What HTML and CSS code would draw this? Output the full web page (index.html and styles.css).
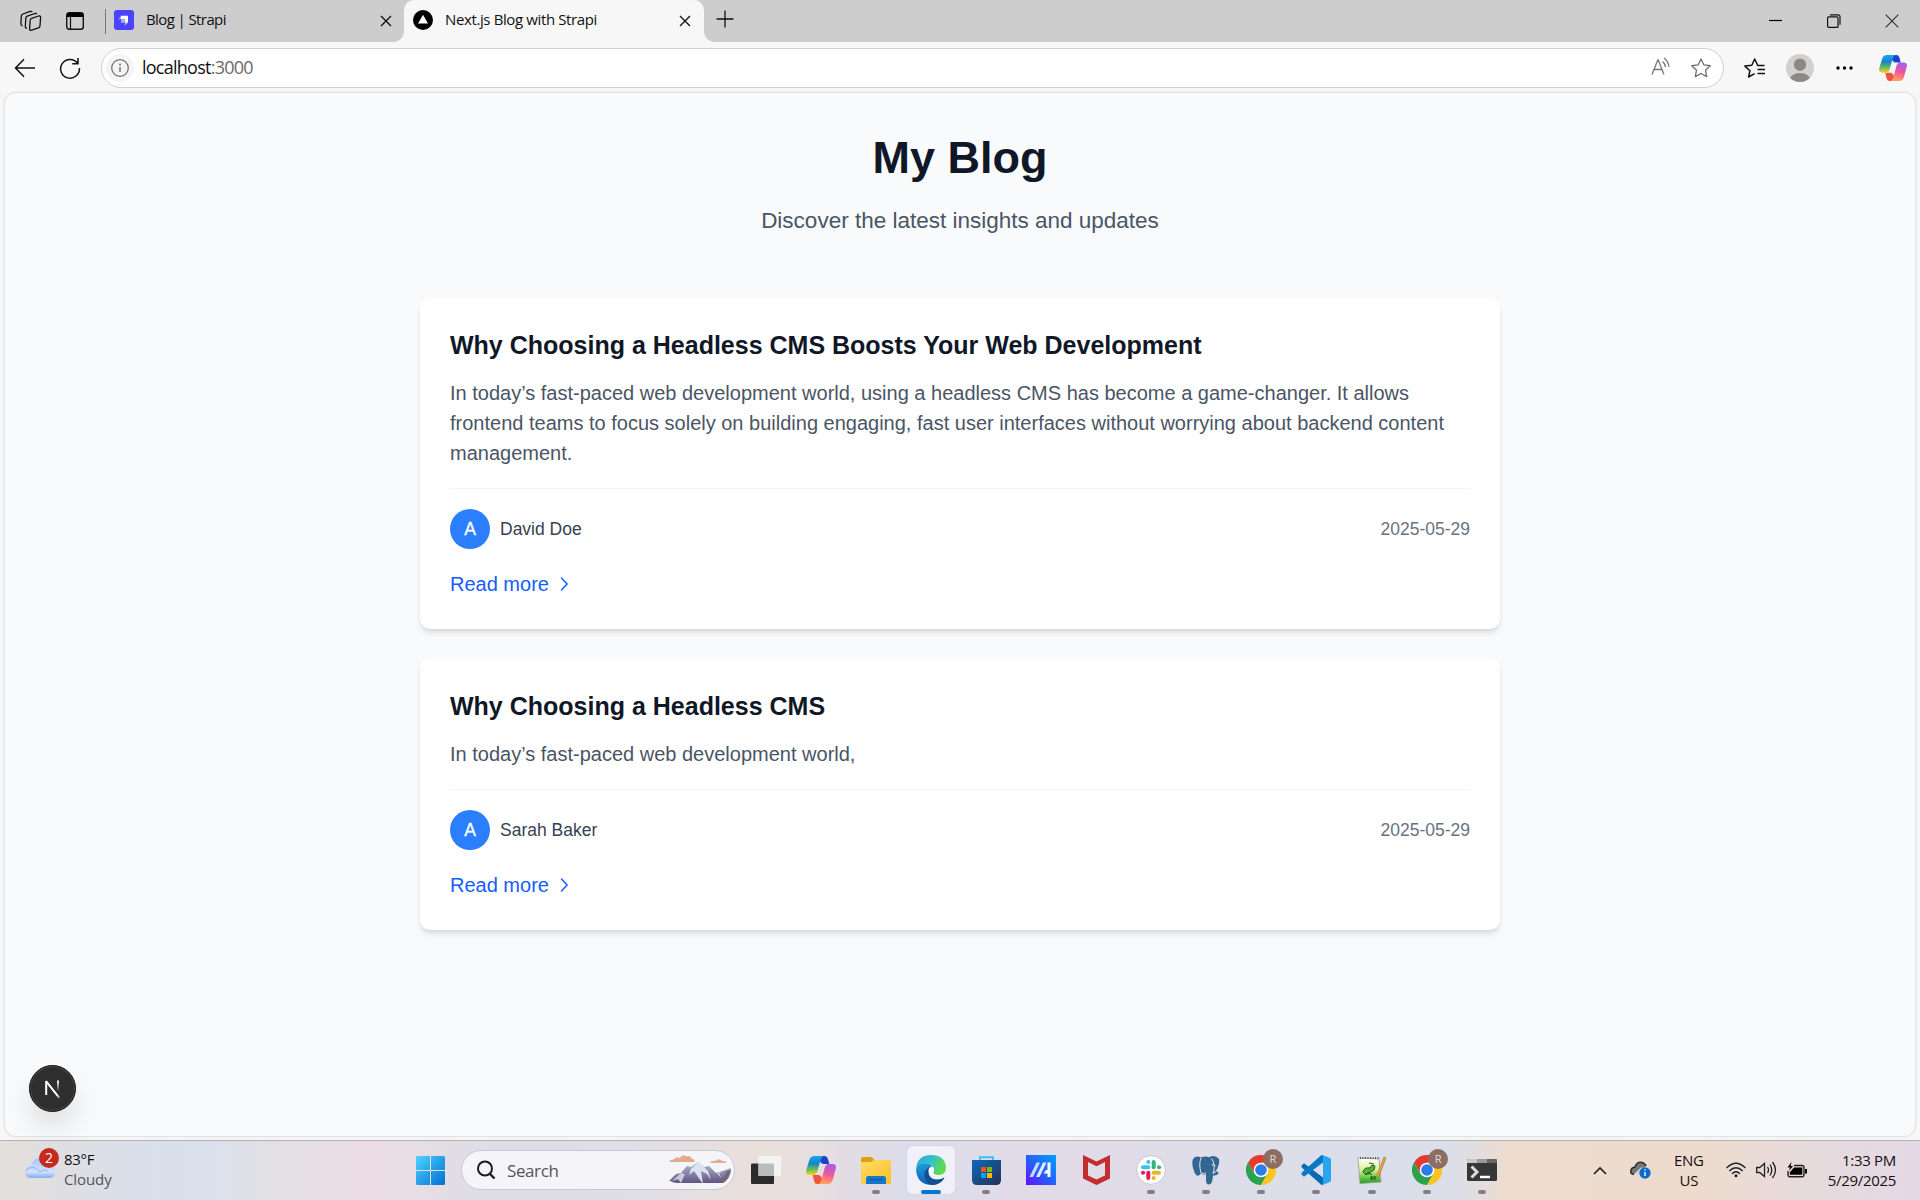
FILE: index.html
```html
<!DOCTYPE html>
<html lang="en">
<head>
<meta charset="utf-8">
<title>Next.js Blog with Strapi</title>
<link rel="stylesheet" href="styles.css">
</head>
<body>
<svg class="defs" width="0" height="0">
  <defs>
    <linearGradient id="cpA" x1="0" y1="0" x2="0" y2="1"><stop offset="0" stop-color="#17a5f5"/><stop offset=".4" stop-color="#1a83c8"/><stop offset=".65" stop-color="#4fb86a"/><stop offset="1" stop-color="#ffd21c"/></linearGradient>
    <linearGradient id="cpB" x1="0.6" y1="0" x2="0.4" y2="1"><stop offset="0" stop-color="#a45cf0"/><stop offset=".5" stop-color="#f0569a"/><stop offset="1" stop-color="#ffa35c"/></linearGradient>
    <linearGradient id="win" x1="0" y1="0" x2="1" y2="1"><stop offset="0" stop-color="#4fd3ff"/><stop offset="1" stop-color="#0070d0"/></linearGradient>
    <linearGradient id="edgeTop" x1="0" y1="0" x2="1" y2=".3"><stop offset="0" stop-color="#2aa4dc"/><stop offset=".55" stop-color="#35c1c8"/><stop offset="1" stop-color="#5fdc4c"/></linearGradient>
    <linearGradient id="edgeLeft" x1="0" y1="0" x2="0.3" y2="1"><stop offset="0" stop-color="#1f9fe0"/><stop offset="1" stop-color="#0f62b4"/></linearGradient>
    <linearGradient id="store" x1="0" y1="0" x2="1" y2="1"><stop offset="0" stop-color="#0c69ba"/><stop offset="1" stop-color="#263156"/></linearGradient>
    <linearGradient id="asus" x1="1" y1="0" x2="0" y2="1"><stop offset="0" stop-color="#00a2ff"/><stop offset=".5" stop-color="#2463ff"/><stop offset="1" stop-color="#6410f5"/></linearGradient>
    <linearGradient id="folder" x1="0" y1="0" x2="1" y2="1"><stop offset="0" stop-color="#ffdc63"/><stop offset="1" stop-color="#fcbf2b"/></linearGradient>
    <linearGradient id="np" x1="0" y1="0" x2="0" y2="1"><stop offset="0" stop-color="#fff"/><stop offset=".45" stop-color="#dff09a"/><stop offset="1" stop-color="#16a316"/></linearGradient>
    <linearGradient id="cloud" x1="0" y1="0" x2="0" y2="1"><stop offset="0" stop-color="#a8c4f5"/><stop offset=".7" stop-color="#cfe3fb"/><stop offset="1" stop-color="#86a9ee"/></linearGradient>
    <linearGradient id="mount" x1="0" y1="0" x2="0" y2="1"><stop offset="0" stop-color="#a9c4dc"/><stop offset=".5" stop-color="#8c87ab"/><stop offset="1" stop-color="#5f5583"/></linearGradient>
    <linearGradient id="nfade" x1="0" y1="0" x2="0" y2="1"><stop offset="0" stop-color="#fff"/><stop offset="1" stop-color="#fff" stop-opacity="0"/></linearGradient>
    <linearGradient id="nfade2" gradientUnits="userSpaceOnUse" x1="5" y1="5" x2="17" y2="20"><stop offset="0" stop-color="#fff"/><stop offset=".7" stop-color="#fff"/><stop offset="1" stop-color="#fff" stop-opacity=".1"/></linearGradient>
    <symbol id="copilot" viewBox="0 0 30 28">
      <path d="M10 0h8.500q2.600 0 3.300 2.500L23.300 8H18q-3 0-4-3z" fill="#1b44c9"/>
      <path d="M20 28h-8.500q-2.600 0-3.300-2.500L6.700 19H12q3 0 4 4z" fill="#f1533c"/>
      <path d="M8.500 0h9q-2 .7-2.800 3.500L11.500 15q-1.200 4-4 4H3.500Q-1 19 .3 14L3.300 4Q4.500 0 8.500 0z" fill="url(#cpA)"/>
      <path d="M21.500 28h-9q2-.7 2.800-3.500L18.500 12.500q1.200-4.500 4-4.500h4q4.500 0 3.200 5l-3 11q-1.200 4-5.200 4z" fill="url(#cpB)"/>
    </symbol>
    <symbol id="chrome" viewBox="0 0 30 30">
      <path d="M2 7.500A15 15 0 0 1 28 7.500L15 8 8.500 18.750z" fill="#e33b2e"/>
      <path d="M2 7.500A15 15 0 0 0 15 30l6.500-11.250L8.500 18.750z" fill="#2ba24c"/>
      <path d="M28 7.500A15 15 0 0 1 15 30l6.500-11.250Q23.500 12 15 7.500z" fill="#fcc41f"/>
      <circle cx="15" cy="15" r="7.300" fill="#fff"/><circle cx="15" cy="15" r="5.800" fill="#2b7cec"/>
    </symbol>
    <symbol id="x" viewBox="0 0 12 12"><path d="M1 1l10 10M11 1L1 11" fill="none" stroke="currentColor" stroke-width="1.400"/></symbol>
  </defs>
</svg>

<header class="tabstrip">
  <div class="tab-tools">
    <svg width="22" height="22" viewBox="0 0 22 22" fill="none" stroke="#111" stroke-width="1.300" stroke-linejoin="round"><path d="M10.200 10q.1-1.200 1.400-1.700l7-2.300q2-.4 2 1.400l-.6 8.500q-.1 1.400-1.500 1.900l-7 2.400q-1.900.5-1.900-1.300z"/><path d="M7 18.300q-1.700 0-1.700-1.700l.5-8.500q.1-1.500 1.500-2l7.500-2.600q1.500-.4 2 .6"/><path d="M2.600 15.800Q.8 15.400.9 13.600l.4-7.400q.1-1.600 1.600-2.200l7.200-2.600q1.500-.4 2.200.6"/></svg>
    <svg width="18" height="18" viewBox="0 0 18 18"><rect x=".7" y=".7" width="16.600" height="16.600" rx="2.500" fill="none" stroke="#111" stroke-width="1.400"/><path d="M.7 5V3Q.7.700 3 .7h12q2.300 0 2.300 2.300v2z"/><path d="M4.500 5v12" stroke="#111" stroke-width="1.200"/></svg>
    <i class="tab-divider"></i>
  </div>
  <div class="tab">
    <svg width="20" height="20" viewBox="0 0 20 20"><rect width="20" height="20" rx="3" fill="#4945ff"/><path d="M7 5.700h7v7h-3.300v-3.500H7z" fill="#fff"/><path d="M7 5.700v3.500H4.800q-.3 0 0-.3zM10.700 12.700v3l3.300-3z" fill="#aaa8ff"/><path d="M7 9.200h3.700v3.500H7.600q-.6 0-.6-.6z" fill="#aaa8ff"/></svg>
    <span class="tab-title t1">Blog | Strapi</span>
    <svg class="close" width="12" height="12"><use href="#x"/></svg>
  </div>
  <div class="tab active">
    <svg width="20" height="20" viewBox="0 0 20 20"><circle cx="10" cy="10" r="10"/><path d="M10 4.800l5 8.700H5z" fill="#fff"/></svg>
    <span class="tab-title t2">Next.js Blog with Strapi</span>
    <svg class="close" width="12" height="12"><use href="#x"/></svg>
  </div>
  <svg class="newtab" width="18" height="18" viewBox="0 0 18 18"><path d="M9 .5v17M.5 9h17" stroke="#111" stroke-width="1.300"/></svg>
  <div class="win-controls">
    <svg width="14" height="14" viewBox="0 0 14 14"><path d="M0 6.500h13" stroke="#000" stroke-width="1.200"/></svg>
    <svg width="14" height="14" viewBox="0 0 14 14" fill="none" stroke="#111" stroke-width="1.200"><rect x=".6" y="2.800" width="10.400" height="10.600" rx="1"/><path d="M3 .8h8q2 0 2 2v8"/></svg>
    <svg width="14" height="14" viewBox="0 0 14 14"><path d="M.7.700l12.600 12.600M13.300.7L.7 13.300" stroke="#333" stroke-width="1.200"/></svg>
  </div>
</header>

<nav class="toolbar">
  <svg class="back" width="22" height="20" viewBox="0 0 22 20" fill="none" stroke="#111" stroke-width="1.500"><path d="M10 1.200L1.500 10l8.500 8.800M1.500 10H21"/></svg>
  <svg class="reload" width="22" height="22" viewBox="0 0 22 22" fill="none" stroke="#111" stroke-width="1.500"><path d="M18.800 6.500A9.400 9.400 0 1 0 20.400 11M19 1v5.800h-5.800"/></svg>
  <div class="address">
    <span class="info"><svg width="18" height="18" viewBox="0 0 18 18"><circle cx="9" cy="9" r="8.300" fill="none" stroke="#6b6b6b" stroke-width="1.200"/><path d="M9 8v5" stroke="#6b6b6b" stroke-width="1.400"/><circle cx="9" cy="5.500" r="1" fill="#6b6b6b"/></svg></span>
    <span class="url">localhost<span class="port">:3000</span></span>
    <svg class="read-aloud" width="20" height="19" viewBox="0 0 20 19" fill="none" stroke="#777" stroke-width="1.300"><path d="M1 17.500L6.800 3h.4L13 17.500M3 12.500h8M11.500 4.500q2.500 2 3 5.500M13 1q4.500 3.500 5 9"/></svg>
    <svg width="22" height="20" viewBox="0 0 22 21" fill="none" stroke="#6b6b6b" stroke-width="1.300" stroke-linejoin="round"><path d="M11 1l2.900 6.200 6.800.9-5 4.700 1.300 6.800-6-3.300-6 3.300 1.300-6.800-5-4.700 6.800-.9z"/></svg>
  </div>
  <svg class="favs" width="22" height="20" viewBox="0 0 22 20" fill="none" stroke="#111" stroke-width="1.500" stroke-linejoin="round"><path d="M20.500 7.500h-6.700L10.700 1 7.800 7.200.9 8.100l5 4.700-1.300 6.200 6-3.300M13.500 11.500H21M13.500 15.500H21"/></svg>
  <svg class="profile" width="28" height="28" viewBox="0 0 28 28"><circle cx="14" cy="14" r="14" fill="#d3d1ce"/><circle cx="14" cy="10.700" r="6.200" fill="#8b8885"/><path d="M4.200 23.900a10.500 7.500 0 0 1 19.600 0A14 14 0 0 1 4.200 23.900z" fill="#8b8885"/></svg>
  <svg class="dots" width="17" height="4" viewBox="0 0 17 4"><circle cx="2" cy="2" r="1.700"/><circle cx="8.500" cy="2" r="1.700"/><circle cx="15" cy="2" r="1.700"/></svg>
  <svg class="pilot" width="28" height="26"><use href="#copilot"/></svg>
</nav>

<div class="viewport">
  <main class="page">
    <header class="intro">
      <h1>My Blog</h1>
      <p>Discover the latest insights and updates</p>
    </header>
    <article class="card">
      <h2>Why Choosing a Headless CMS Boosts Your Web Development</h2>
      <p class="excerpt">In today’s fast-paced web development world, using a headless CMS has become a game-changer. It allows frontend teams to focus solely on building engaging, fast user interfaces without worrying about backend content management.</p>
      <div class="meta"><span class="avatar">A</span><span class="author">David Doe</span><time>2025-05-29</time></div>
      <a class="more">Read more <svg width="20" height="20" viewBox="0 0 16 16"><path d="M6 3.200L10.500 8 6 12.800" fill="none" stroke="currentColor" stroke-width="1.200" stroke-linecap="round" stroke-linejoin="round"/></svg></a>
    </article>
    <article class="card">
      <h2>Why Choosing a Headless CMS</h2>
      <p class="excerpt">In today’s fast-paced web development world,</p>
      <div class="meta"><span class="avatar">A</span><span class="author">Sarah Baker</span><time>2025-05-29</time></div>
      <a class="more">Read more <svg width="20" height="20" viewBox="0 0 16 16"><path d="M6 3.200L10.500 8 6 12.800" fill="none" stroke="currentColor" stroke-width="1.200" stroke-linecap="round" stroke-linejoin="round"/></svg></a>
    </article>
  </main>
  <div class="next-badge"><svg width="18" height="20" viewBox="0 0 18 20"><path d="M2.200 2v14" stroke="#fff" stroke-width="2"/><path d="M2 2.200l13.500 17" stroke="url(#nfade2)" stroke-width="2"/><rect x="13" y="1.500" width="2" height="11" fill="url(#nfade)"/></svg></div>
</div>

<footer class="taskbar">
  <div class="weather">
    <div class="weather-icon"><svg width="31" height="21" viewBox="0 0 31 21"><path d="M7 20q-7 0-7-6t6-6.500Q8 0 15 0q6 0 8.500 6.500Q30.500 7 30.500 13.500T24 20z" fill="url(#cloud)"/><path d="M.5 13.500q1-4 6-4 5.500-.3 8 4.500 4-3.500 8-1" fill="none" stroke="#8fb0ee" stroke-width="1"/></svg><b>2</b></div>
    <div class="weather-text"><span>83°F</span><span class="dim">Cloudy</span></div>
  </div>
  <svg class="start" width="29" height="29" viewBox="0 0 29 29"><path fill="url(#win)" d="M1.500 0H14v14H0V1.500Q0 0 1.500 0zM15 0h12.500Q29 0 29 1.500V14H15zM0 15h14v14H1.500Q0 29 0 27.500zM15 15h14v12.500q0 1.500-1.500 1.500H15z"/></svg>
  <div class="search">
    <svg width="20" height="20" viewBox="0 0 20 20" fill="none" stroke="#1d1d1d" stroke-width="2"><circle cx="9" cy="8.500" r="7"/><path d="M13.500 13.500l5 5" stroke-width="2.400"/></svg>
    <span>Search</span>
    <svg class="scene" width="64" height="32" viewBox="0 0 64 32"><path d="M1 8q1-3 5-2.500Q8 2 12 4q2-4 7-1.500 5-1 4.500 2.500Q28 5 26 8z" fill="#e2a98d"/><path d="M42 9q1-3 5-2 4-3.500 7 0 5-.5 4 2z" fill="#e4ae92"/><path d="M1 27l7-7 5-1 6-7 4 1 7-5 6 5 5-1 7 7 7-2 8-3q-1 9-8 15H10q-6 0-9-3z" fill="url(#mount)"/><path d="M30 8l-7 7-2 6 5-4 9 13-2-13 6 3 4 6-3-9-4-4z" fill="#dbe2ee"/><path d="M13 19l-9 8 6-2 3 4 4-9zM48 18l5 6-2-6 6 2z" fill="#cbc9dd"/><path d="M63 16l-4 1-6 12h2q7-4 8-13z" fill="#736a70"/></svg>
  </div>
  <div class="apps">
    <div class="app"><svg width="30" height="28" viewBox="0 0 30 28"><rect y="7.500" width="23" height="20.500" rx="1" fill="#2b2b2b"/><rect x="7.500" width="22.500" height="20" rx="1" fill="#f3f3f3"/><path d="M7.500 7.500H23V20H7.500z" fill="#bcbcbc"/></svg></div>
    <div class="app"><svg width="30" height="28"><use href="#copilot"/></svg></div>
    <div class="app run"><svg width="30" height="27" viewBox="0 0 30 27"><path d="M0 1.500Q0 0 1.500 0h8q1 0 1.700.8L13.500 3v4H0z" fill="#dfa00c"/><path d="M0 5h10l3-2h15.500q1.500 0 1.500 1.500v21q0 1.500-1.500 1.500h-27Q0 27 0 25.500z" fill="url(#folder)"/><path d="M5 27v-5.500Q5 19 7.500 19h15q2.500 0 2.500 2.500V27z" fill="#1578cc"/><path d="M8.500 22.700h13" stroke="#0b4f91"/></svg></div>
    <div class="app run current"><svg width="30" height="30" viewBox="0 0 30 30"><path d="M0 15Q1 8 9 8q8 .3 8 6-5 0-4.500 5 .8 6 8.500 6 4.500 0 7-2-4 7-13 7Q1 29 0 15z" fill="url(#edgeLeft)"/><path d="M8.500 20q-.5-7 8-8.500-5 1.500-4 7 1.500 6 9 6 4 0 6.500-2 .6 0 .3.800-4 6.700-12 6.600-7-1-7.800-9.900z" fill="#134e93"/><path d="M0 14.500Q1 0 15 0q14 0 15 12.500 0 7.500-7.500 7.500-5.500 0-5.500-2.200 1.500-1.600 1-3.800Q16.500 8 9.500 8 2 8 0 14.500z" fill="url(#edgeTop)"/><path d="M12.500 16q-.2-4 4-4.500 2.500 2.500.8 6 .2 1.500 2.500 2.500-5 2.500-7.300-4z" fill="#fff"/></svg></div>
    <div class="app run"><svg width="29" height="29" viewBox="0 0 29 29"><path d="M8 5V1.200h13V5" fill="none" stroke="#36c5f5" stroke-width="2"/><path d="M0 4h29v20q0 5-5 5H5q-5 0-5-5z" fill="url(#store)"/><path d="M9 11h5v5H9z" fill="#f25022"/><path d="M15 11h5v5h-5z" fill="#7fba00"/><path d="M9 17h5v5H9z" fill="#00a4ef"/><path d="M15 17h5v5h-5z" fill="#ffb900"/></svg></div>
    <div class="app"><svg width="30" height="30" viewBox="0 0 30 30"><path d="M0 0h30v30H0z" fill="url(#asus)"/><path d="M3.500 22L10.500 7.500H14L7 22z" fill="#c5dcff"/><path d="M10 22l7-14.500h3.500L13.500 22z" fill="#dfe9ff"/><path d="M17.500 18.500L20 15h1.500V7.500h3V22h-3v-3.500z" fill="#fff"/></svg></div>
    <div class="app"><svg width="27" height="30" viewBox="0 0 27 30"><path d="M0 0l13.500 6.500L27 0v23.500L13.500 30 0 23.500zM5 7v13.500l8.500 4 8.500-4V7l-8.500 4.300z" fill="#c22d2f" fill-rule="evenodd"/></svg></div>
    <div class="app run"><svg width="30" height="30" viewBox="0 0 30 30"><circle cx="15" cy="15" r="14.400" fill="#fff" stroke="#c5c5cb"/><g stroke-width="4" stroke-linecap="round"><path d="M12.300 12.300H7" stroke="#36c5f0"/><path d="M12.300 7h.1" stroke="#36c5f0"/><path d="M17.700 7v5.300" stroke="#2eb67d"/><path d="M23 12.300h.1" stroke="#2eb67d"/><path d="M17.700 17.700H23" stroke="#ecb22e"/><path d="M17.700 23v.1" stroke="#ecb22e"/><path d="M12.300 17.700V23" stroke="#e01e5a"/><path d="M7 17.700h.1" stroke="#e01e5a"/></g></svg></div>
    <div class="app run"><svg width="28" height="29" viewBox="0 0 28 29"><path d="M1 3q3-4 8-1.500 4-2 8-.3 6-3 10 1.800 1 5-3 12l3 2q-2 3-6 2.500-.5 7-2.500 8.500-4 1.500-4.500-3V18q-3 1.500-5-.5-4 5-6.500-1Q-1 8 1 3z" fill="#336791"/><path d="M9 2Q6.500 8 9 17M19.500 2.500q4 5 2 15M9 17q3 2 5-.5M19.500 9q2.500-1 4 1M24 15.500q-2 1.500-3.500 1.500" fill="none" stroke="#e7e5f0" stroke-width="1"/></svg></div>
    <div class="app run"><svg width="30" height="30"><use href="#chrome"/></svg><b class="who">R</b></div>
    <div class="app run"><svg width="30" height="30" viewBox="0 0 30 30"><path d="M.5 10.500l2.500-2.300L22 22.500V30h-1.500L.5 12.300z" fill="#0a69b4"/><path d="M.5 19.500L3 21.800 22 7.500V0h-1.500L.5 17.700z" fill="#0879c8"/><path d="M21.500 0L29 3q1 .5 1 1.500v21q0 1-1 1.500l-7.500 3q-1 0-1.500-.5 2 .5 2-1.500V2Q22 0 20 .5z" fill="#2aa5f2"/></svg></div>
    <div class="app run"><svg width="30" height="28" viewBox="0 0 30 28"><path d="M1 2l21 1 2 23-21 1.500z" fill="url(#np)" stroke="#999" stroke-width=".8"/><path d="M3 2h19" stroke="#555" stroke-width="2" stroke-dasharray="1 1.500"/><path d="M6 16q1-5 7-4l2-3 3 1-1 4-5 3q-3 3-6-1zM8 19l4-3 3 3M12 7l5 1" fill="#54b13c" stroke="#26601d"/><path d="M27 1l2 1-7 18-2 2 0-3z" fill="#edae36" stroke="#99632e" stroke-width=".6"/><path d="M13 23l2-3v4l3-4v4" fill="none" stroke="#234b18"/></svg></div>
    <div class="app run"><svg width="30" height="30"><use href="#chrome"/></svg><b class="who">R</b></div>
    <div class="app run"><svg width="30" height="22" viewBox="0 0 30 22"><rect width="30" height="22" rx="1.500" fill="#373737"/><path d="M0 4V1.500Q0 0 1.500 0H10v4z" fill="#c9c9c9"/><path d="M10 0h10v4H10z" fill="#999"/><path d="M20 0h8.500Q30 0 30 1.500V4H20z" fill="#666"/><path d="M4.500 7.500L10 13l-5.500 5.500" fill="none" stroke="#ddd" stroke-width="3"/><path d="M13 18h10" stroke="#fff" stroke-width="2.500"/></svg></div>
  </div>
  <div class="tray">
    <svg class="chev" width="14" height="9" viewBox="0 0 14 9"><path d="M1 8l6-6 6 6" fill="none" stroke="#222" stroke-width="1.700"/></svg>
    <svg class="onedrive" width="21" height="18" viewBox="0 0 21 18"><path d="M4 13.500Q0 13 .9 9.500 1.500 6.500 5 6q1.500-5 6-4.800 3.500.3 5 3.800" fill="#777" stroke="#333" stroke-width="1.600"/><path d="M3.500 13.500l7.500-7 5 1-4 6z" fill="#d5d3d1"/><circle cx="15" cy="12" r="5.700" fill="#0a6cce"/><path d="M15 11v4M15 8.200v1.300" stroke="#fff" stroke-width="1.400"/></svg>
    <div class="lang"><span>ENG</span><span>US</span></div>
    <svg class="wifi" width="20" height="16" viewBox="0 0 20 16" fill="none" stroke="#222" stroke-width="1.400"><path d="M.6 6q9.400-9.500 18.800 0M3.300 9q6.700-6.500 13.400 0M6 11.700q4-4 8 0"/><circle cx="10" cy="13.700" r="1.500" fill="#222" stroke="none"/></svg>
    <svg class="vol" width="21" height="18" viewBox="0 0 21 18" fill="none" stroke="#222" stroke-width="1.300"><path d="M.7 6.500v5h3L8.500 15.500v-13L3.700 6.500zM11.500 6q2 3 0 6M14 3.500q3.500 5.500 0 11M16.500 1q6 8 0 16"/></svg>
    <svg class="batt" width="20" height="16" viewBox="0 0 20 16"><path d="M7 3.500h8q2 0 2 2v7.300q0 2-2 2H3q-2 0-2-2V9" fill="none" stroke="#222" stroke-width="1.400"/><path d="M7 5.500h8.300v7.300H2.800V10.500z"/><path d="M18 7h2v4.500h-2zM4.500 0L.5 5.500H3L2 9l4-5H3.700z"/></svg>
    <div class="clock"><span class="time">1:33 PM</span><span class="date">5/29/2025</span></div>
  </div>
</footer>
</body>
</html>
```

FILE: styles.css
```css
* { box-sizing: border-box; }
html, body { height: 100%; }
body {
  margin: 0;
  display: flex;
  flex-direction: column;
  overflow: hidden;
  background: #f7f7f7;
  font-family: "Open Sans", "Noto Sans", sans-serif;
  color: #111;
}
svg { display: block; flex: none; }
.defs { position: absolute; }

/* Tab strip */
.tabstrip {
  height: 42px;
  flex: none;
  display: flex;
  align-items: flex-start;
  background: #cdcdcd;
}
.tab-tools { display: flex; align-items: center; height: 41px; width: 107px; padding-left: 20px; gap: 24px; }
.tab-tools .tab-divider { width: 1px; height: 25px; background: #777; margin-left: -3px; margin-top: 2px; }
.tab { height: 42px; display: flex; align-items: center; padding: 0 12px 2px 7px; width: 297px; font-size: 15px; }
.tab-title { margin: -2px 0 0 12px; white-space: nowrap; letter-spacing: -0.38px; }
.t1 { letter-spacing: -0.6px; }
.tab .close { margin-left: auto; margin-top: 1px; }
.active {
  position: relative;
  width: 300px;
  padding-left: 9px;
  padding-right: 13px;
  background: #f7f7f7;
  border-radius: 10px 10px 0 0;
}
.active::before, .active::after {
  content: "";
  position: absolute;
  bottom: 0;
  width: 10px;
  height: 10px;
}
.active::before { left: -10px; background: radial-gradient(circle at 0 0, transparent 9.5px, #f7f7f7 10px); }
.active::after { right: -10px; background: radial-gradient(circle at 100% 0, transparent 9.5px, #f7f7f7 10px); }
.newtab { margin: 10px 0 0 12px; }
.win-controls { display: flex; gap: 44px; margin: 14px 21px 0 auto; }

/* Toolbar */
.toolbar { height: 50px; flex: none; display: flex; align-items: center; padding: 1px 13px 0 14px; }
.reload { margin-left: 23px; }
.address {
  height: 40px;
  width: 1625px;
  margin-left: 20px;
  display: flex;
  align-items: center;
  padding: 0 11px 0 4px;
  background: #fff;
  border: 1px solid #cfcfcf;
  border-radius: 20px;
}
.info { width: 28px; height: 28px; border-radius: 50%; background: #f4f4f4; display: grid; place-items: center; }
.url { margin: -2px 0 0 8px; font-size: 18px; letter-spacing: -0.75px; }
.port { color: #6b6b6b; }
.read-aloud { margin: 0 19px 2px auto; }
.favs { margin-left: 20px; }
.profile { margin-left: 20px; }
.dots { margin-left: 22px; }
.pilot { margin-left: 26px; }

/* Web page */
.viewport {
  position: relative;
  height: 1045px;
  flex: none;
  margin: 0 4px;
  border: 1px solid #e3e3e5;
  border-radius: 12px;
  background: #f9fafc;
  box-shadow: 0 0 2px rgba(0, 0, 0, .1);
  font-family: "Liberation Sans", Arial, sans-serif;
}
.page { width: 1080px; margin: 0 auto; padding-top: 40px; }
.intro { text-align: center; margin-bottom: 60px; }
h1 { margin: 0 0 20px; font-size: 45px; line-height: 50px; color: #101828; }
.intro p { margin: 0; font-size: 22.5px; line-height: 35px; color: #4a5565; }
.card {
  margin-bottom: 30px;
  padding: 30px;
  border-radius: 10px;
  background: #fff;
  box-shadow: 0 5px 7.5px -1px rgba(0, 0, 0, .1), 0 2.5px 5px -2.5px rgba(0, 0, 0, .1);
}
h2 { margin: 0 0 15px; font-size: 25px; line-height: 35px; color: #101828; white-space: nowrap; }
.excerpt { margin: 0 0 20px; font-size: 20px; line-height: 30px; color: #4a5565; }
.meta { display: flex; align-items: center; padding-top: 20px; border-top: 1px solid #f3f4f6; font-size: 17.5px; }
.avatar { width: 40px; height: 40px; border-radius: 50%; background: #2b7fff; color: #fff; display: grid; place-items: center; -webkit-text-stroke: .3px #fff; }
.author { margin-left: 10px; color: #364153; }
time { margin-left: auto; color: #6a7282; }
.more { display: flex; align-items: center; gap: 5px; height: 30px; margin-top: 20px; font-size: 20px; color: #155dfc; }
.next-badge {
  position: absolute;
  left: 24px;
  top: 972px;
  width: 47px;
  height: 47px;
  border-radius: 50%;
  border: 1px solid #111;
  background: #2e2e2e;
  box-shadow: inset 0 0 0 1px #494949, 0 16px 32px -8px rgba(0, 0, 0, .24);
  display: grid;
  place-items: center;
}

/* Taskbar */
.taskbar {
  height: 60px;
  flex: none;
  margin-top: 3px;
  padding-bottom: 1px;
  display: flex;
  align-items: center;
  border-top: 1px solid #b2b2b5;
  background:
    linear-gradient(90deg, #e4dfda 0, #dadfeb 130px, #d9e1ed 200px, #e4dfe2 290px, #ecdde4 370px, #dddde6 500px, #e0dee6 640px, #ebdfda 770px, #dddcea 900px, #e2dbe8 1050px, #dedde9 1200px, #dadfeb 1400px, #dddfe7 1460px, #eedcce 1510px, #eddcce 1700px, #e7dadb 1800px, #e4d8e5 1920px);
}
.weather { width: 430px; margin-right: -14px; padding-left: 25px; display: flex; align-items: center; }
.weather-icon { position: relative; padding-top: 4px; margin-top: -8px; }
.weather-icon b {
  position: absolute;
  left: 14px;
  top: -6px;
  width: 20px;
  height: 20px;
  border-radius: 50%;
  background: #c42b1c;
  color: #fff;
  font-size: 14px;
  font-weight: 400;
  line-height: 20px;
  text-align: center;
}
.weather-text, .lang, .clock { display: flex; flex-direction: column; font-size: 15px; line-height: 20px; white-space: nowrap; letter-spacing: -0.3px; }
.weather-text { margin-left: 8px; margin-top: -3px; }
.dim { color: #555; letter-spacing: -0.1px; }
.search {
  width: 274px;
  height: 40px;
  margin-left: 16px;
  padding: 0 2px 0 14px;
  display: flex;
  align-items: center;
  border: 1px solid #cac8cf;
  border-radius: 20px;
  background: #f5f4f8;
  font-size: 17px;
  color: #555;
}
.search span { margin-left: 11px; letter-spacing: -0.4px; }
.scene { margin-left: auto; }
.apps { display: flex; margin-left: 3.5px; }
.app { position: relative; width: 55.05px; height: 48px; display: grid; place-items: center; }
.app svg { position: relative; }
.run::after {
  content: "";
  position: absolute;
  bottom: 0;
  left: calc(50% - 4px);
  width: 8px;
  height: 4px;
  border-radius: 2px;
  background: #808086;
}
.current::before {
  content: "";
  position: absolute;
  inset: 0 3.5px;
  border-radius: 5px;
  background: #eff0f8;
  box-shadow: 0 0 1px #aaa;
}
.current::after { left: calc(50% - 10px); width: 20px; background: #0078d4; }
.who {
  position: absolute;
  left: 29px;
  top: 3px;
  width: 20px;
  height: 20px;
  border-radius: 50%;
  background: #8d6e63;
  color: #e5dcd8;
  font: 11px/20px "Open Sans", sans-serif;
  text-align: center;
}
.tray { margin-left: auto; display: flex; align-items: center; padding-right: 24px; }
.onedrive { margin-left: 23px; }
.lang { margin-left: 23px; align-items: center; }
.wifi { margin-left: 22px; }
.vol { margin-left: 10px; }
.batt { margin-left: 10px; }
.clock { margin-left: 21px; align-items: flex-end; }
```
